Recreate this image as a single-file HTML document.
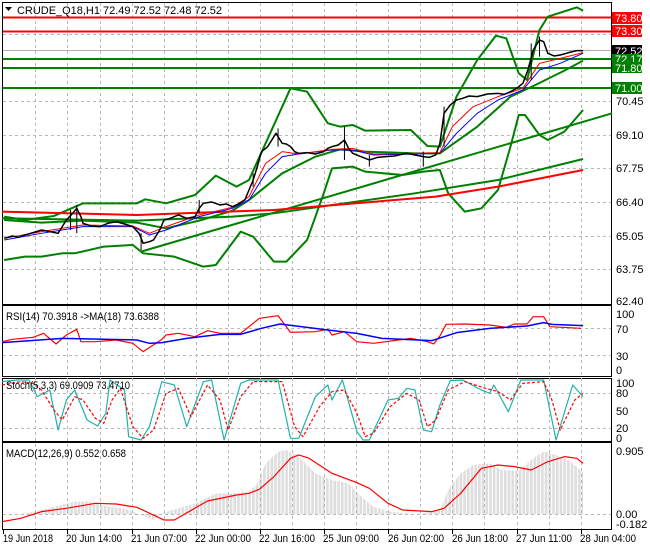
<!DOCTYPE html>
<html><head><meta charset="utf-8"><style>
html,body{margin:0;padding:0;background:#fff;}
body{width:650px;height:550px;overflow:hidden;position:relative;font-family:"Liberation Sans",sans-serif;}
svg{position:absolute;left:0;top:0;}
text{font-family:"Liberation Sans",sans-serif;font-size:11px;}
</style></head><body>
<svg width="650" height="550" viewBox="0 0 650 550">
<defs>
<pattern id="hist" width="3.3" height="10" patternUnits="userSpaceOnUse"><rect x="0" y="0" width="1" height="10" fill="#b0b0b0"/></pattern>
</defs>
<g fill="none" stroke="#000" stroke-width="1">
<rect x="2.5" y="2.5" width="609" height="302"/>
<rect x="2.5" y="305.5" width="609" height="71"/>
<rect x="2.5" y="378.5" width="609" height="63"/>
<rect x="2.5" y="442.5" width="609" height="87"/>
</g>
<g stroke="#b8b8b8" stroke-dasharray="3,3" stroke-width="1">
<path d="M35.5 3V304M67.5 3V304M100.5 3V304M132.5 3V304M164.5 3V304M196.5 3V304M228.5 3V304M260.5 3V304M292.5 3V304M324.5 3V304M356.5 3V304M388.5 3V304M420.5 3V304M452.5 3V304M484.5 3V304M517.5 3V304M549.5 3V304M581.5 3V304"/>
<path d="M35.5 306V529M67.5 306V529M100.5 306V529M132.5 306V529M164.5 306V529M196.5 306V529M228.5 306V529M260.5 306V529M292.5 306V529M324.5 306V529M356.5 306V529M388.5 306V529M420.5 306V529M452.5 306V529M484.5 306V529M517.5 306V529M549.5 306V529M581.5 306V529"/>
<path d="M3 34.5H611M3 68.5H611M3 101.5H611M3 135.5H611M3 168.5H611M3 202.5H611M3 236.5H611M3 269.5H611"/>
<path d="M3 328.5H611M3 355.5H611M3 393.5H611M3 428.5H611M3 514.5H611"/>
</g>
<path d="M3 17.5H611M3 31.5H611" stroke="#ff0000" stroke-width="2"/>
<path d="M3 50.5H611" stroke="#b0b0b0" stroke-width="1"/>
<path d="M3 59H611M3 68H611M3 88H611" stroke="#008000" stroke-width="2"/>

<g transform="scale(0.415,0.3333)" fill="none" stroke-linejoin="round">
<path vector-effect="non-scaling-stroke" stroke="#008000" stroke-width="2" d="M10 650L60 660L130 648L200 610L330 610L350 598L400 610L470 585L520 527L570 560L600 540L640 430L700 265L740 275L790 370L820 380L850 375L880 392L990 390L1030 438L1060 440L1100 290L1150 180L1195 107L1220 115L1250 220L1270 240L1300 90L1320 50L1390 22L1405 32"/>
<path vector-effect="non-scaling-stroke" stroke="#008000" stroke-width="2" d="M10 660L100 668L200 662L330 668L400 685L480 662L560 632L600 600L680 520L760 470L820 448L880 455L1000 460L1060 460L1150 380L1230 290L1290 255L1360 212L1405 182"/>
<path vector-effect="non-scaling-stroke" stroke="#008000" stroke-width="2" d="M10 780L60 770L100 770L150 760L180 760L250 740L320 735L345 760L420 770L490 800L520 795L580 695L610 710L660 785L690 785L740 720L780 580L800 505L850 500L880 515L970 525L1020 515L1060 510L1080 580L1120 635L1160 625L1200 570L1230 440L1250 345L1265 345L1300 405L1320 420L1360 395L1405 330"/>
<path vector-effect="non-scaling-stroke" stroke="#008000" stroke-width="2" d="M340 755L1475 340"/>
<path vector-effect="non-scaling-stroke" stroke="#008000" stroke-width="2" d="M5 655L330 662L560 650L660 640L1000 580L1200 540L1405 477"/>
<path vector-effect="non-scaling-stroke" stroke="#ff0000" stroke-width="2" d="M5 635L330 645L660 630L1050 590L1200 560L1405 510"/>
<path vector-effect="non-scaling-stroke" stroke="#0000ff" stroke-width="1" d="M10 720L100 700L200 680L320 680L360 705L400 690L480 650L560 625L600 600L640 520L680 470L720 462L800 450L850 450L900 465L1000 462L1060 460L1100 400L1150 340L1200 300L1260 270L1300 210L1350 190L1405 160"/>
<path vector-effect="non-scaling-stroke" stroke="#ff0000" stroke-width="1" d="M10 715L100 695L200 675L320 678L360 700L400 680L480 645L560 622L600 590L640 490L680 455L720 462L800 448L850 445L900 462L1000 460L1060 458L1090 380L1140 320L1200 290L1260 265L1300 190L1350 175L1405 158"/>
<path vector-effect="non-scaling-stroke" stroke="#000" stroke-width="1.5" d="M10 715L30 708L45 712L60 705L80 698L100 690L120 695L140 700L150 680L160 660L175 640L185 625L195 650L200 670L220 678L240 680L260 670L280 665L300 672L320 680L335 700L345 730L360 725L370 720L385 690L395 660L410 655L430 645L450 655L470 650L480 625L490 610L510 606L530 615L545 612L560 620L575 612L590 600L600 570L610 540L620 500L630 455L645 440L665 400L675 420L680 430L690 432L700 440L710 455L720 460L740 458L760 462L780 455L790 445L800 440L815 435L830 420L840 445L850 460L870 470L890 480L910 472L930 470L950 468L980 460L1000 465L1020 470L1035 472L1050 465L1060 430L1070 340L1085 315L1100 300L1115 295L1130 288L1150 290L1175 282L1200 280L1215 283L1230 275L1245 265L1260 250L1272 210L1285 150L1300 120L1310 125L1320 160L1335 168L1350 165L1370 158L1390 152L1405 152"/>
<path vector-effect="non-scaling-stroke" stroke="#000" stroke-width="1" d="M185 615V700M170 630V690M340 700V750M830 380V480M1280 130V240M1300 110V170M670 385V440M1070 320V440M480 600V640M610 520V560M1020 455V500M890 465V500"/>
</g>

<g transform="translate(0,300) scale(0.415,0.3333)" fill="none" stroke-linejoin="round">
<path fill="url(#hist)" stroke="none" d="M5 643L5 645L60 640L100 630L180 605L210 605L260 620L300 625L330 640L370 660L390 640L430 625L470 610L520 580L560 580L600 575L620 550L640 490L670 455L690 450L720 470L760 520L800 540L840 550L870 590L900 620L940 635L1000 643L1060 630L1080 570L1110 520L1140 495L1180 490L1210 510L1250 512L1290 470L1310 455L1340 465L1370 480L1405 518L1405 643Z"/>
<path vector-effect="non-scaling-stroke" stroke="#ff0000" stroke-width="1.2" d="M5 665L50 655L100 635L160 625L230 610L280 612L330 622L395 660L420 660L500 603L570 585L600 580L625 568L660 530L700 475L720 465L745 475L800 520L860 548L890 565L935 610L970 630L1040 635L1070 625L1110 580L1160 505L1200 495L1240 500L1280 510L1320 485L1360 470L1390 475L1405 490"/>
<path vector-effect="non-scaling-stroke" stroke="#ff0000" stroke-width="1.2" d="M5 125L30 118L80 112L105 100L135 132L160 105L185 88L195 125L230 125L280 120L320 130L345 155L390 118L400 105L430 100L470 110L500 92L530 100L580 100L600 80L625 55L670 47L700 97L760 95L790 88L800 105L830 95L860 125L900 130L960 120L990 115L1030 125L1045 132L1060 108L1075 73L1120 72L1180 75L1220 82L1240 72L1270 72L1285 50L1310 50L1325 80L1400 85"/>
<path vector-effect="non-scaling-stroke" stroke="#0000ff" stroke-width="1.5" d="M5 128L150 115L330 120L360 130L390 128L450 115L530 103L580 103L630 85L675 72L790 90L860 100L920 115L1040 122L1100 98L1180 85L1270 78L1310 68L1330 73L1405 77"/>
<path vector-effect="non-scaling-stroke" stroke="#20b2aa" stroke-width="1.2" d="M5 245L40 240L70 240L90 290L120 270L140 390L160 300L180 270L210 360L235 378L255 340L265 240L300 270L310 410L340 420L360 380L390 245L420 255L450 380L490 245L510 240L540 420L580 250L600 240L670 240L700 415L720 415L760 290L790 255L800 300L825 240L860 395L875 420L890 420L935 300L960 295L980 265L1000 270L1020 390L1040 395L1060 315L1085 242L1115 240L1160 270L1180 280L1190 255L1225 335L1255 240L1310 240L1340 420L1380 255L1405 290"/>
<path vector-effect="non-scaling-stroke" stroke="#ff0000" stroke-width="1.2" stroke-dasharray="3,2" d="M5 255L50 245L80 250L100 270L130 330L150 360L180 290L200 300L230 355L250 370L270 300L290 265L320 380L345 415L370 390L400 280L430 265L460 350L500 255L530 300L550 390L580 290L610 245L680 245L710 380L730 410L770 320L800 275L830 270L860 340L880 410L900 400L940 320L980 280L1010 300L1030 380L1050 360L1080 270L1120 245L1170 265L1200 275L1230 300L1260 250L1310 245L1330 300L1350 390L1385 300L1405 280"/>
</g>

<path d="M5 7L12 7L8.5 11Z" fill="#000"/>
<text x="17" y="14" fill="#000" textLength="205" lengthAdjust="spacingAndGlyphs">CRUDE_Q18,H1  72.49 72.52 72.48 72.52</text>
<text x="6" y="320" fill="#000" textLength="153" lengthAdjust="spacingAndGlyphs">RSI(14) 70.3918  -&gt;MA(18) 73.6388</text>
<text x="6" y="389" fill="#000" textLength="124" lengthAdjust="spacingAndGlyphs">Stoch(5,3,3) 69.0909 73.4710</text>
<text x="6" y="457" fill="#000" textLength="120" lengthAdjust="spacingAndGlyphs">MACD(12,26,9) 0.552 0.658</text>

<g fill="#000" font-size="10">
<text x="616" y="105" font-size="10">70.45</text>
<text x="616" y="139" font-size="10">69.10</text>
<text x="616" y="172" font-size="10">67.75</text>
<text x="616" y="206" font-size="10">66.40</text>
<text x="616" y="240" font-size="10">65.05</text>
<text x="616" y="273" font-size="10">63.75</text>
<text x="616" y="305" font-size="10">62.40</text>
<text x="616" y="318" font-size="10">100</text>
<text x="616" y="333" font-size="10">70</text>
<text x="616" y="360" font-size="10">30</text>
<text x="616" y="374" font-size="10">0</text>
<text x="616" y="387" font-size="10">100</text>
<text x="616" y="397" font-size="10">80</text>
<text x="616" y="415" font-size="10">50</text>
<text x="616" y="432" font-size="10">20</text>
<text x="616" y="442" font-size="10">0</text>
<text x="616" y="455" font-size="10">0.905</text>
<text x="616" y="518" font-size="10">0.00</text>
<text x="616" y="528" font-size="10">-0.182</text>
</g>
<rect x="612" y="12" width="30" height="12" fill="#ff0000"/><text x="615" y="22" fill="#fff" font-size="10">73.80</text>
<rect x="612" y="25" width="30" height="12" fill="#ff0000"/><text x="615" y="35" fill="#fff" font-size="10">73.30</text>
<rect x="612" y="45" width="30" height="11" fill="#000"/><text x="615" y="55" fill="#fff" font-size="10">72.52</text>
<rect x="612" y="54" width="30" height="11" fill="#008000"/><text x="615" y="63" fill="#fff" font-size="10">72.17</text>
<rect x="612" y="62" width="30" height="11" fill="#008000"/><text x="615" y="72" fill="#fff" font-size="10">71.80</text>
<rect x="612" y="82" width="30" height="12" fill="#008000"/><text x="615" y="92" fill="#fff" font-size="10">71.00</text>

<g fill="#000" font-size="10">
<text x="3" y="542" font-size="10" textLength="50" lengthAdjust="spacingAndGlyphs">19 Jun 2018</text>
<text x="66" y="542" font-size="10" textLength="56" lengthAdjust="spacingAndGlyphs">20 Jun 14:00</text>
<text x="131" y="542" font-size="10" textLength="56" lengthAdjust="spacingAndGlyphs">21 Jun 07:00</text>
<text x="195" y="542" font-size="10" textLength="56" lengthAdjust="spacingAndGlyphs">22 Jun 00:00</text>
<text x="259" y="542" font-size="10" textLength="56" lengthAdjust="spacingAndGlyphs">22 Jun 16:00</text>
<text x="323" y="542" font-size="10" textLength="56" lengthAdjust="spacingAndGlyphs">25 Jun 09:00</text>
<text x="388" y="542" font-size="10" textLength="56" lengthAdjust="spacingAndGlyphs">26 Jun 02:00</text>
<text x="452" y="542" font-size="10" textLength="56" lengthAdjust="spacingAndGlyphs">26 Jun 18:00</text>
<text x="516" y="542" font-size="10" textLength="56" lengthAdjust="spacingAndGlyphs">27 Jun 11:00</text>
<text x="580" y="542" font-size="10" textLength="56" lengthAdjust="spacingAndGlyphs">28 Jun 04:00</text>
</g>
<path d="M3.5 530V534M67.5 530V534M132.5 530V534M196.5 530V534M260.5 530V534M324.5 530V534M388.5 530V534M452.5 530V534M517.5 530V534M581.5 530V534" stroke="#000"/>
</svg>
</body></html>
